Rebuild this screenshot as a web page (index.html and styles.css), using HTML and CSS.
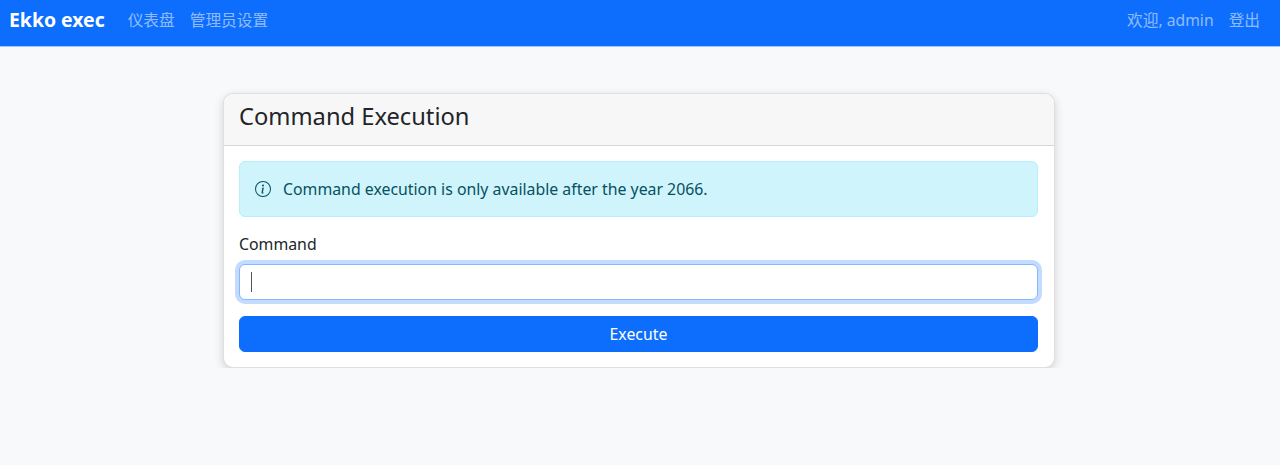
FILE: index.html
```html
<!DOCTYPE html>
<html lang="zh-CN">
<head>
  <meta charset="UTF-8">
  <meta name="viewport" content="width=device-width, initial-scale=1.0">
  <title>Ekko exec</title>
  <link rel="stylesheet" href="styles.css">
</head>
<body>
  <nav class="navbar">
    <a class="brand" href="#">Ekko exec</a>
    <div class="nav-links">
      <a href="#">仪表盘</a>
      <a href="#">管理员设置</a>
    </div>
    <div class="nav-links nav-right">
      <span>欢迎, admin</span>
      <a href="#">登出</a>
    </div>
  </nav>

  <main class="container">
    <div class="card">
      <div class="card-header">
        <h1>Command Execution</h1>
      </div>
      <div class="card-body">
        <div class="alert">
          <svg class="info-icon" viewBox="0 0 16 16" width="16" height="16" fill="currentColor" aria-hidden="true">
            <path d="M8 15A7 7 0 1 1 8 1a7 7 0 0 1 0 14zm0 1A8 8 0 1 0 8 0a8 8 0 0 0 0 16z"/>
            <path d="m8.93 6.588-2.29.287-.082.38.45.083c.294.07.352.176.288.469l-.738 3.468c-.194.897.105 1.319.808 1.319.545 0 1.178-.252 1.465-.598l.088-.416c-.2.176-.492.246-.686.246-.275 0-.375-.193-.304-.533L8.93 6.588zM9 4.5a1 1 0 1 1-2 0 1 1 0 0 1 2 0z"/>
          </svg>
          <span>Command execution is only available after the year 2066.</span>
        </div>
        <form>
          <label class="form-label" for="command">Command</label>
          <div class="input-focus" id="command">
            <span class="caret"></span>
          </div>
          <button class="btn" type="button">Execute</button>
        </form>
      </div>
    </div>
  </main>
</body>
</html>
```

FILE: styles.css
```css
body {
  font-family: "Noto Sans", "Noto Sans CJK SC", sans-serif;
  font-size: 15.85px;
  line-height: 24px;
  margin: 0;
  background: #f8f9fa;
  color: #212529;
}

a {
  text-decoration: none;
}

/* navbar */
.navbar {
  display: flex;
  align-items: center;
  height: 47px;
  box-sizing: border-box;
  padding: 0 20px 6px 9px;
  background: #0d6efd;
  border-bottom: 1px solid #9fc5fe;
}

.brand {
  color: #fff;
  font-size: 19.4px;
  font-weight: 700;
  margin-right: 23px;
}

.nav-links {
  display: flex;
  gap: 15px;
  font-size: 15.7px;
  color: rgba(255, 255, 255, 0.55);
}

.nav-links a {
  color: rgba(255, 255, 255, 0.55);
}

.nav-right {
  margin-left: auto;
}

/* card */
.container {
  padding: 46px 225px 0 223px;
}

.card {
  background: #fff;
  border: 1px solid rgba(0, 0, 0, 0.125);
  border-radius: 10px;
  box-shadow: 0 3px 10px rgba(0, 0, 0, 0.16);
}

.card-header {
  padding: 5px 15px 12px;
  background: #f7f7f7;
  border-bottom: 1px solid rgba(0, 0, 0, 0.125);
  border-radius: 9px 9px 0 0;
}

.card-header h1 {
  margin: 0;
  font-size: 23.7px;
  font-weight: 400;
  line-height: 34px;
}

.card-body {
  padding: 15px 16px 15px 15px;
}

.alert {
  display: flex;
  align-items: center;
  gap: 12px;
  height: 56px;
  box-sizing: border-box;
  padding: 0 15px;
  margin-bottom: 15px;
  background: #cff4fc;
  border: 1px solid #b6effb;
  border-radius: 6px;
  color: #055160;
}

.info-icon {
  flex: none;
}

.form-label {
  display: block;
  margin-bottom: 8px;
}

.input-focus {
  display: flex;
  align-items: center;
  height: 36px;
  box-sizing: border-box;
  padding: 0 11px;
  background: #fff;
  border: 1px solid #86b7fe;
  border-radius: 6px;
  box-shadow: 0 0 0 4px rgba(13, 110, 253, 0.25);
}

.caret {
  width: 1px;
  height: 20px;
  background: #555;
}

.btn {
  display: block;
  width: 100%;
  height: 36px;
  margin-top: 16px;
  background: #0d6efd;
  border: 1px solid #0d6efd;
  border-radius: 6px;
  color: #fff;
  font: inherit;
}
```
